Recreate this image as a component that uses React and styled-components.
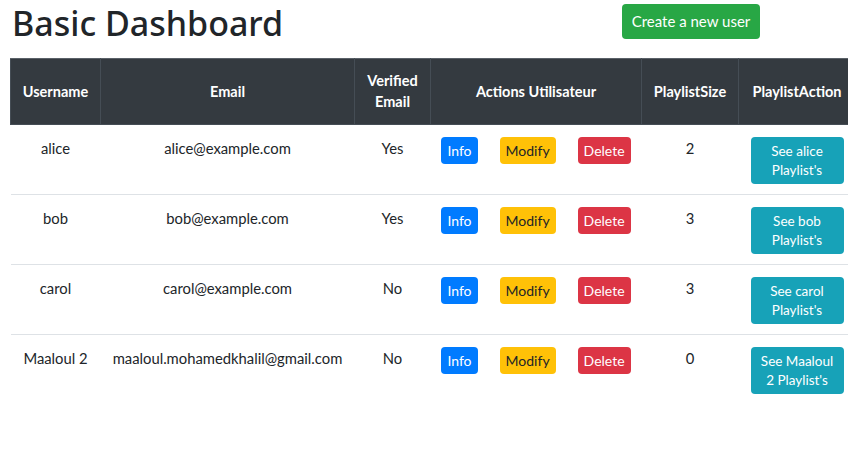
import React from 'react';
import styled, { createGlobalStyle } from 'styled-components';

const GlobalStyle = createGlobalStyle`
  html, body {
    margin: 0;
    padding: 0;
    background: #fff;
    overflow: hidden;
  }
  body {
    font-family: Lato, 'Noto Sans', sans-serif;
    color: #212529;
  }
`;

const Page = styled.div`
  padding: 0 10px;
  width: 845px;
`;

const TopBar = styled.div`
  display: flex;
  align-items: flex-start;
  height: 58px;
`;

const Title = styled.h1`
  margin: 0;
  padding-left: 2px;
  font-family: 'Noto Sans', sans-serif;
  font-size: 34px;
  font-weight: 500;
  line-height: 46px;
  width: 610px;
`;

const Button = styled.button`
  font-family: inherit;
  border: none;
  border-radius: 4px;
  color: ${p => p.$dark ? '#212529' : '#fff'};
  background: ${p => p.$bg};
  font-size: ${p => p.$size || 14}px;
  line-height: 19px;
  height: 27px;
  padding: 4px 6px;
  cursor: pointer;
`;

const CreateButton = styled(Button)`
  margin-top: 4px;
  width: 138px;
  height: 35px;
  padding: 0;
`;

const Table = styled.table`
  table-layout: fixed;
  width: 845px;
  border-collapse: collapse;
  text-align: center;
`;

const Th = styled.th`
  background: #343a40;
  color: #fff;
  font-size: 14.5px;
  font-weight: 700;
  line-height: 21px;
  padding: 11px 8px 12px;
  height: 42px;
  border: 1px solid #454d55;
  border-top-color: #5a6168;
  vertical-align: middle;
`;

const Td = styled.td`
  padding: 11px 12px 10px;
  font-size: 14.8px;
  line-height: 24px;
  vertical-align: top;
  border-top: 1px solid #dee2e6;
  height: 48px;
  white-space: nowrap;
`;

const Actions = styled.div`
  display: flex;
  justify-content: center;
  gap: 22px;
  padding-top: 1px;
`;

const PlaylistButton = styled(Button)`
  display: block;
  width: 93px;
  height: 47px;
  margin-top: 1px;
  padding: 4px 6px;
  white-space: normal;
  font-size: 13.5px;
  line-height: 19px;
`;

const users = [
  { name: 'alice', email: 'alice@example.com', verified: 'Yes', size: 2 },
  { name: 'bob', email: 'bob@example.com', verified: 'Yes', size: 3 },
  { name: 'carol', email: 'carol@example.com', verified: 'No', size: 3 },
  { name: 'Maaloul 2', email: 'maaloul.mohamedkhalil@gmail.com', verified: 'No', size: 0 },
];

export default function App() {
  return (
    <Page>
      <GlobalStyle />
      <TopBar>
        <Title>Basic Dashboard</Title>
        <CreateButton $bg="#28a745" $size={15}>Create a new user</CreateButton>
      </TopBar>
      <Table>
        <colgroup>
          <col style={{ width: 90 }} />
          <col style={{ width: 254 }} />
          <col style={{ width: 76 }} />
          <col style={{ width: 211 }} />
          <col style={{ width: 97 }} />
          <col style={{ width: 117 }} />
        </colgroup>
        <thead>
          <tr>
            <Th>Username</Th>
            <Th>Email</Th>
            <Th>Verified Email</Th>
            <Th>Actions Utilisateur</Th>
            <Th>PlaylistSize</Th>
            <Th>PlaylistAction</Th>
          </tr>
        </thead>
        <tbody>
          {users.map(u => (
            <tr key={u.email}>
              <Td>{u.name}</Td>
              <Td>{u.email}</Td>
              <Td>{u.verified}</Td>
              <Td>
                <Actions>
                  <Button $bg="#007bff">Info</Button>
                  <Button $bg="#ffc107" $dark>Modify</Button>
                  <Button $bg="#dc3545">Delete</Button>
                </Actions>
              </Td>
              <Td>{u.size}</Td>
              <Td>
                <PlaylistButton $bg="#17a2b8">See {u.name} Playlist's</PlaylistButton>
              </Td>
            </tr>
          ))}
        </tbody>
      </Table>
    </Page>
  );
}
